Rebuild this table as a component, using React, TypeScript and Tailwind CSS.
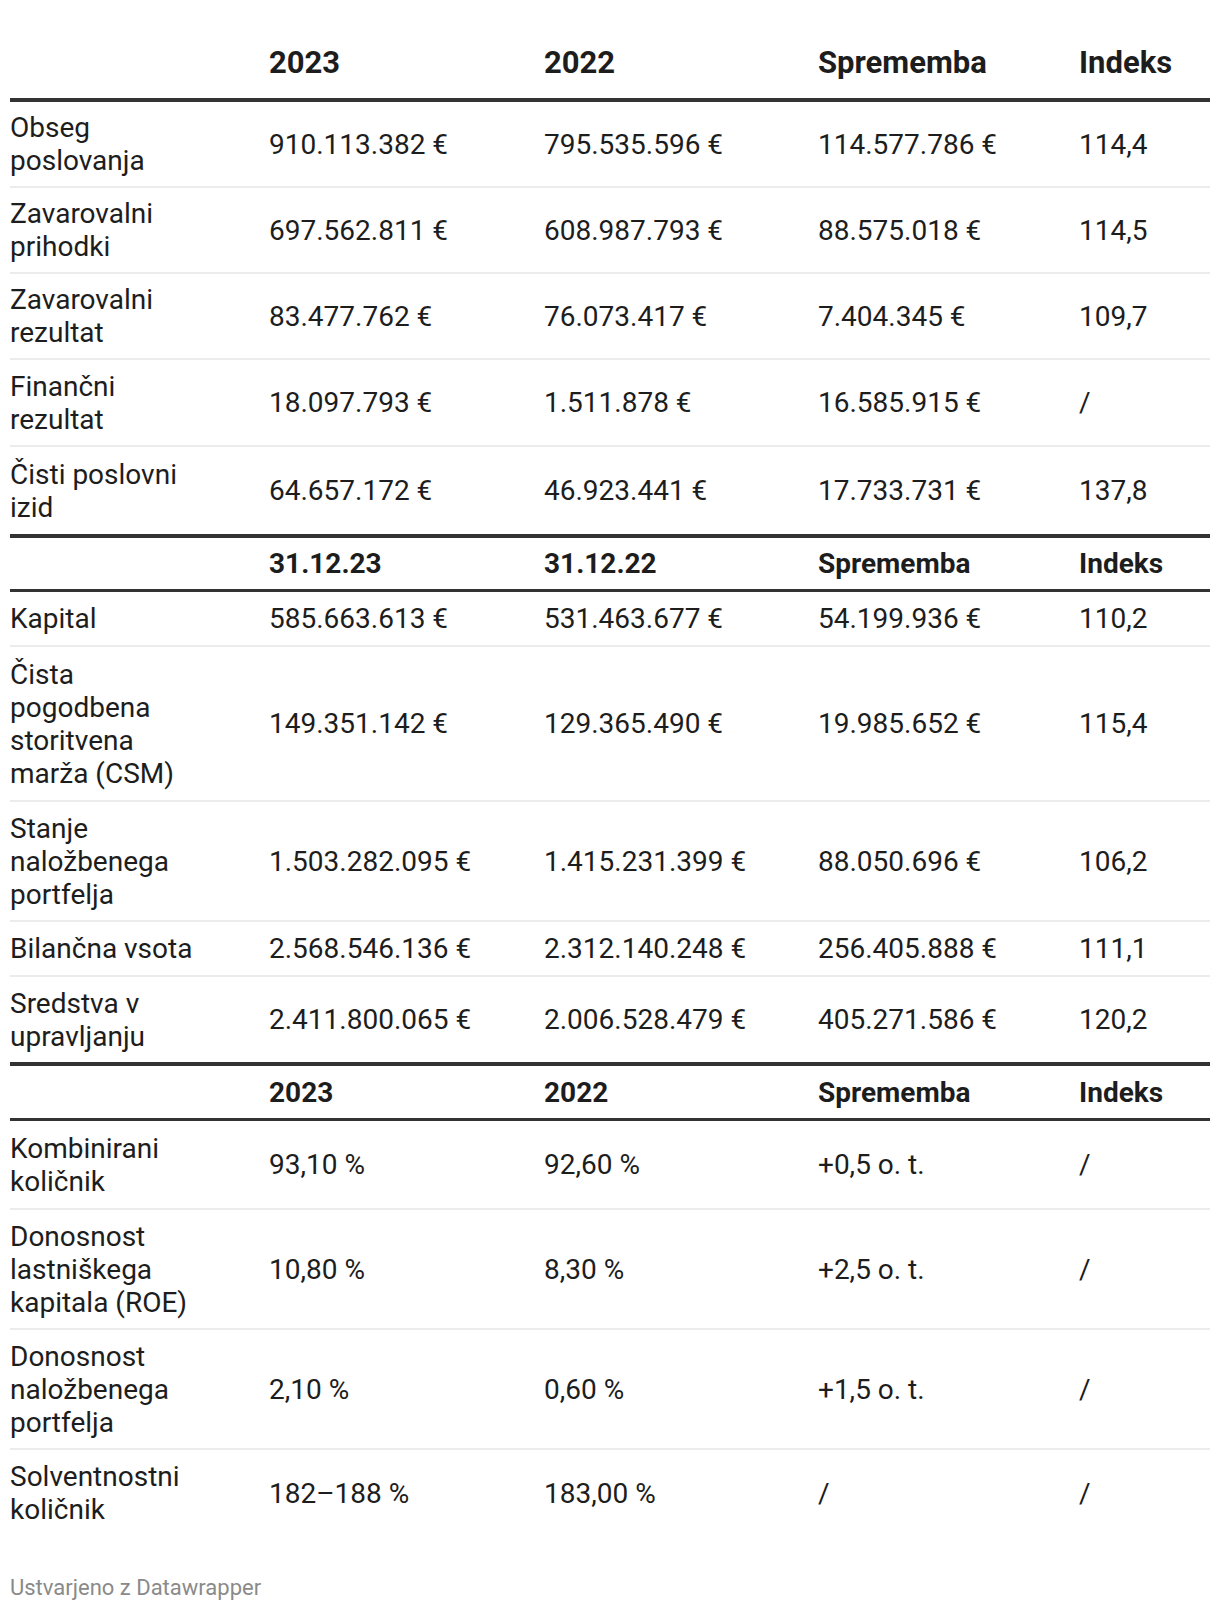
import React from "react";

type Row = {
  label: string;
  values: string[];
  h: string;
  last?: boolean;
};

type Section = {
  header: string[];
  headerClass: string;
  rows: Row[];
};

// shared column grid: label column + four value columns
const cols = "grid grid-cols-[259px_275px_274px_261px_131px] items-center";

const sections: Section[] = [
  {
    header: ["2023", "2022", "Sprememba", "Indeks"],
    headerClass: "h-[74px] border-b-[4px] text-[31px] leading-[36px]",
    rows: [
      { label: "Obseg poslovanja", values: ["910.113.382 €", "795.535.596 €", "114.577.786 €", "114,4"], h: "h-[86px]" },
      { label: "Zavarovalni prihodki", values: ["697.562.811 €", "608.987.793 €", "88.575.018 €", "114,5"], h: "h-[86px]" },
      { label: "Zavarovalni rezultat", values: ["83.477.762 €", "76.073.417 €", "7.404.345 €", "109,7"], h: "h-[86px]" },
      { label: "Finančni rezultat", values: ["18.097.793 €", "1.511.878 €", "16.585.915 €", "/"], h: "h-[87px]" },
      { label: "Čisti poslovni izid", values: ["64.657.172 €", "46.923.441 €", "17.733.731 €", "137,8"], h: "h-[87px]", last: true },
    ],
  },
  {
    header: ["31.12.23", "31.12.22", "Sprememba", "Indeks"],
    headerClass: "h-[58px] border-t-[4px] border-b-[3px] text-[28px] leading-[33px]",
    rows: [
      { label: "Kapital", values: ["585.663.613 €", "531.463.677 €", "54.199.936 €", "110,2"], h: "h-[55px]" },
      { label: "Čista pogodbena storitvena marža (CSM)", values: ["149.351.142 €", "129.365.490 €", "19.985.652 €", "115,4"], h: "h-[155px]" },
      { label: "Stanje naložbenega portfelja", values: ["1.503.282.095 €", "1.415.231.399 €", "88.050.696 €", "106,2"], h: "h-[120px]" },
      { label: "Bilančna vsota", values: ["2.568.546.136 €", "2.312.140.248 €", "256.405.888 €", "111,1"], h: "h-[55px]" },
      { label: "Sredstva v upravljanju", values: ["2.411.800.065 €", "2.006.528.479 €", "405.271.586 €", "120,2"], h: "h-[85px]", last: true },
    ],
  },
  {
    header: ["2023", "2022", "Sprememba", "Indeks"],
    headerClass: "h-[59px] border-t-[4px] border-b-[3px] text-[28px] leading-[33px]",
    rows: [
      { label: "Kombinirani količnik", values: ["93,10 %", "92,60 %", "+0,5 o. t.", "/"], h: "h-[89px]" },
      { label: "Donosnost lastniškega kapitala (ROE)", values: ["10,80 %", "8,30 %", "+2,5 o. t.", "/"], h: "h-[120px]" },
      { label: "Donosnost naložbenega portfelja", values: ["2,10 %", "0,60 %", "+1,5 o. t.", "/"], h: "h-[120px]" },
      { label: "Solventnostni količnik", values: ["182–188 %", "183,00 %", "/", "/"], h: "h-[86px]", last: true },
    ],
  },
];

export default function App() {
  return (
    <div className="min-h-screen bg-white px-[10px] pt-[28px] pb-[11px] font-['Roboto','Liberation_Sans',sans-serif] text-[#1d1d1d]">
      {sections.map((s, si) => (
        <div key={si}>
          <div className={`${cols} ${s.headerClass} border-[#333333] font-bold`}>
            <div />
            {s.header.map((c, i) => (
              <div key={i} className="whitespace-nowrap">
                {c}
              </div>
            ))}
          </div>
          {s.rows.map((r, ri) => (
            <div
              key={ri}
              className={`${cols} ${r.h} ${r.last ? "" : "border-b-2 border-[#ececec]"} text-[28px] leading-[33px]`}
            >
              <div className="max-w-[200px]">{r.label}</div>
              {r.values.map((v, vi) => (
                <div key={vi} className="whitespace-nowrap">
                  {v}
                </div>
              ))}
            </div>
          ))}
        </div>
      ))}
      <div className="mt-[39px] text-[22px] leading-[26px] text-[#8a8a8a]">Ustvarjeno z Datawrapper</div>
    </div>
  );
}
